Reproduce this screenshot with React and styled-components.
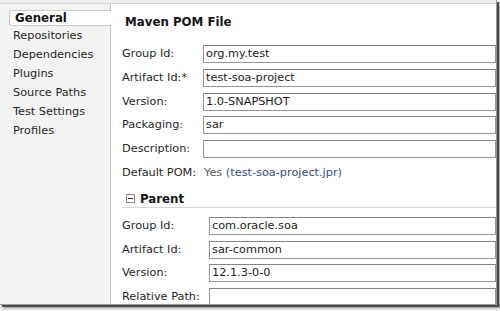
import React from "react";
import styled, { createGlobalStyle } from "styled-components";

const Global = createGlobalStyle`
  html, body { margin: 0; padding: 0; background: #ffffff; }
  body { font-family: "DejaVu Sans", Verdana, sans-serif; }
`;

const Page = styled.div`
  width: 500px;
  height: 311px;
  overflow: hidden;
  background: #f0f0f0;
`;

const Window = styled.div`
  width: 497px;
  height: 305px;
  box-sizing: border-box;
  display: flex;
  flex-direction: column;
  background: #fff;
  border-right: 1px solid #9a9a9a;
  border-bottom: 1px solid #9a9a9a;
  box-shadow: 2px 2px 0 #4a4a4a, 3px 3px 2px #888;
  overflow: hidden;
`;

const TopStrip = styled.div`
  height: 3px;
  flex: none;
  background: #ececec;
  border-bottom: 1px solid #d4d4d4;
`;

const Main = styled.div`
  flex: 1;
  display: flex;
  min-height: 0;
`;

const Sidebar = styled.nav`
  width: 110px;
  flex: none;
  background: #f3f3f3;
  border-right: 1px solid #c4c4c4;
  padding-top: 6px;
  font-size: 11.3px;
  color: #262626;
`;

const Tab = styled.div`
  margin-left: 9px;
  margin-right: -1px;
  height: 16px;
  box-sizing: border-box;
  background: #fff;
  border: 1px solid #cacaca;
  border-right: none;
  border-radius: 3px 0 0 3px;
  padding-left: 5px;
  font-weight: bold;
  font-size: 11.8px;
  line-height: 14px;
  color: #161616;
  position: relative;
`;

const NavItem = styled.div`
  padding-left: 13px;
  line-height: 19px;
`;

const Content = styled.section`
  flex: 1;
  min-width: 0;
  padding: 10px 0 0 11px;
  overflow: hidden;
  font-size: 11.3px;
  color: #262626;
`;

const Title = styled.div`
  margin-left: 3px;
  font-weight: bold;
  font-size: 11.8px;
  line-height: 16px;
  color: #161616;
`;

const Form = styled.div`
  display: grid;
  grid-template-columns: ${(p) => p.$label}px 1fr;
  grid-auto-rows: 18px;
  row-gap: 5.75px;
  align-items: center;
  margin-top: ${(p) => p.$top}px;
`;

const Label = styled.div`
  white-space: nowrap;
  line-height: 18px;
`;

const Field = styled.div`
  height: 18px;
  box-sizing: border-box;
  border: 1px solid #959595;
  border-top-color: #858585;
  padding-left: 2px;
  line-height: 16px;
  color: #1c1c1c;
  white-space: nowrap;
`;

const Value = styled.div`
  line-height: 18px;
  white-space: nowrap;
  padding-left: 1px;
`;

const Yes = styled.span`
  color: #5c5c5c;
`;

const Link = styled.span`
  color: #2c4f8e;
`;

const SectionHeader = styled.div`
  display: flex;
  align-items: center;
  gap: 5px;
  height: 16px;
  margin-top: 9px;
  padding-left: 4px;
  border-bottom: 1px solid #d6d6d6;
  font-weight: bold;
  font-size: 11.8px;
  color: #161616;
`;

const Collapse = () => (
  <svg width="9" height="9" viewBox="0 0 9 9">
    <rect x="0.5" y="0.5" width="8" height="8" fill="#fff" stroke="#8c8c8c" />
    <path d="M2 4.5h5" stroke="#333" strokeWidth="1" />
  </svg>
);

const nav = ["Repositories", "Dependencies", "Plugins", "Source Paths", "Test Settings", "Profiles"];

const pom = [
  ["Group Id:", "org.my.test"],
  ["Artifact Id:*", "test-soa-project"],
  ["Version:", "1.0-SNAPSHOT"],
  ["Packaging:", "sar"],
  ["Description:", ""],
];

const parent = [
  ["Group Id:", "com.oracle.soa"],
  ["Artifact Id:", "sar-common"],
  ["Version:", "12.1.3-0-0"],
  ["Relative Path:", ""],
];

export default function App() {
  return (
    <Page>
      <Global />
      <Window>
        <TopStrip />
        <Main>
          <Sidebar>
            <Tab>General</Tab>
            {nav.map((n) => (
              <NavItem key={n}>{n}</NavItem>
            ))}
          </Sidebar>
          <Content>
            <Title>Maven POM File</Title>
            <Form $label={81} $top={15}>
              {pom.map(([l, v]) => (
                <React.Fragment key={l}>
                  <Label>{l}</Label>
                  <Field>{v}</Field>
                </React.Fragment>
              ))}
              <Label>Default POM:</Label>
              <Value>
                <Yes>Yes</Yes> <Link>(test-soa-project.jpr)</Link>
              </Value>
            </Form>
            <SectionHeader>
              <Collapse />
              Parent
            </SectionHeader>
            <Form $label={87} $top={9}>
              {parent.map(([l, v]) => (
                <React.Fragment key={l}>
                  <Label>{l}</Label>
                  <Field>{v}</Field>
                </React.Fragment>
              ))}
            </Form>
          </Content>
        </Main>
      </Window>
    </Page>
  );
}
